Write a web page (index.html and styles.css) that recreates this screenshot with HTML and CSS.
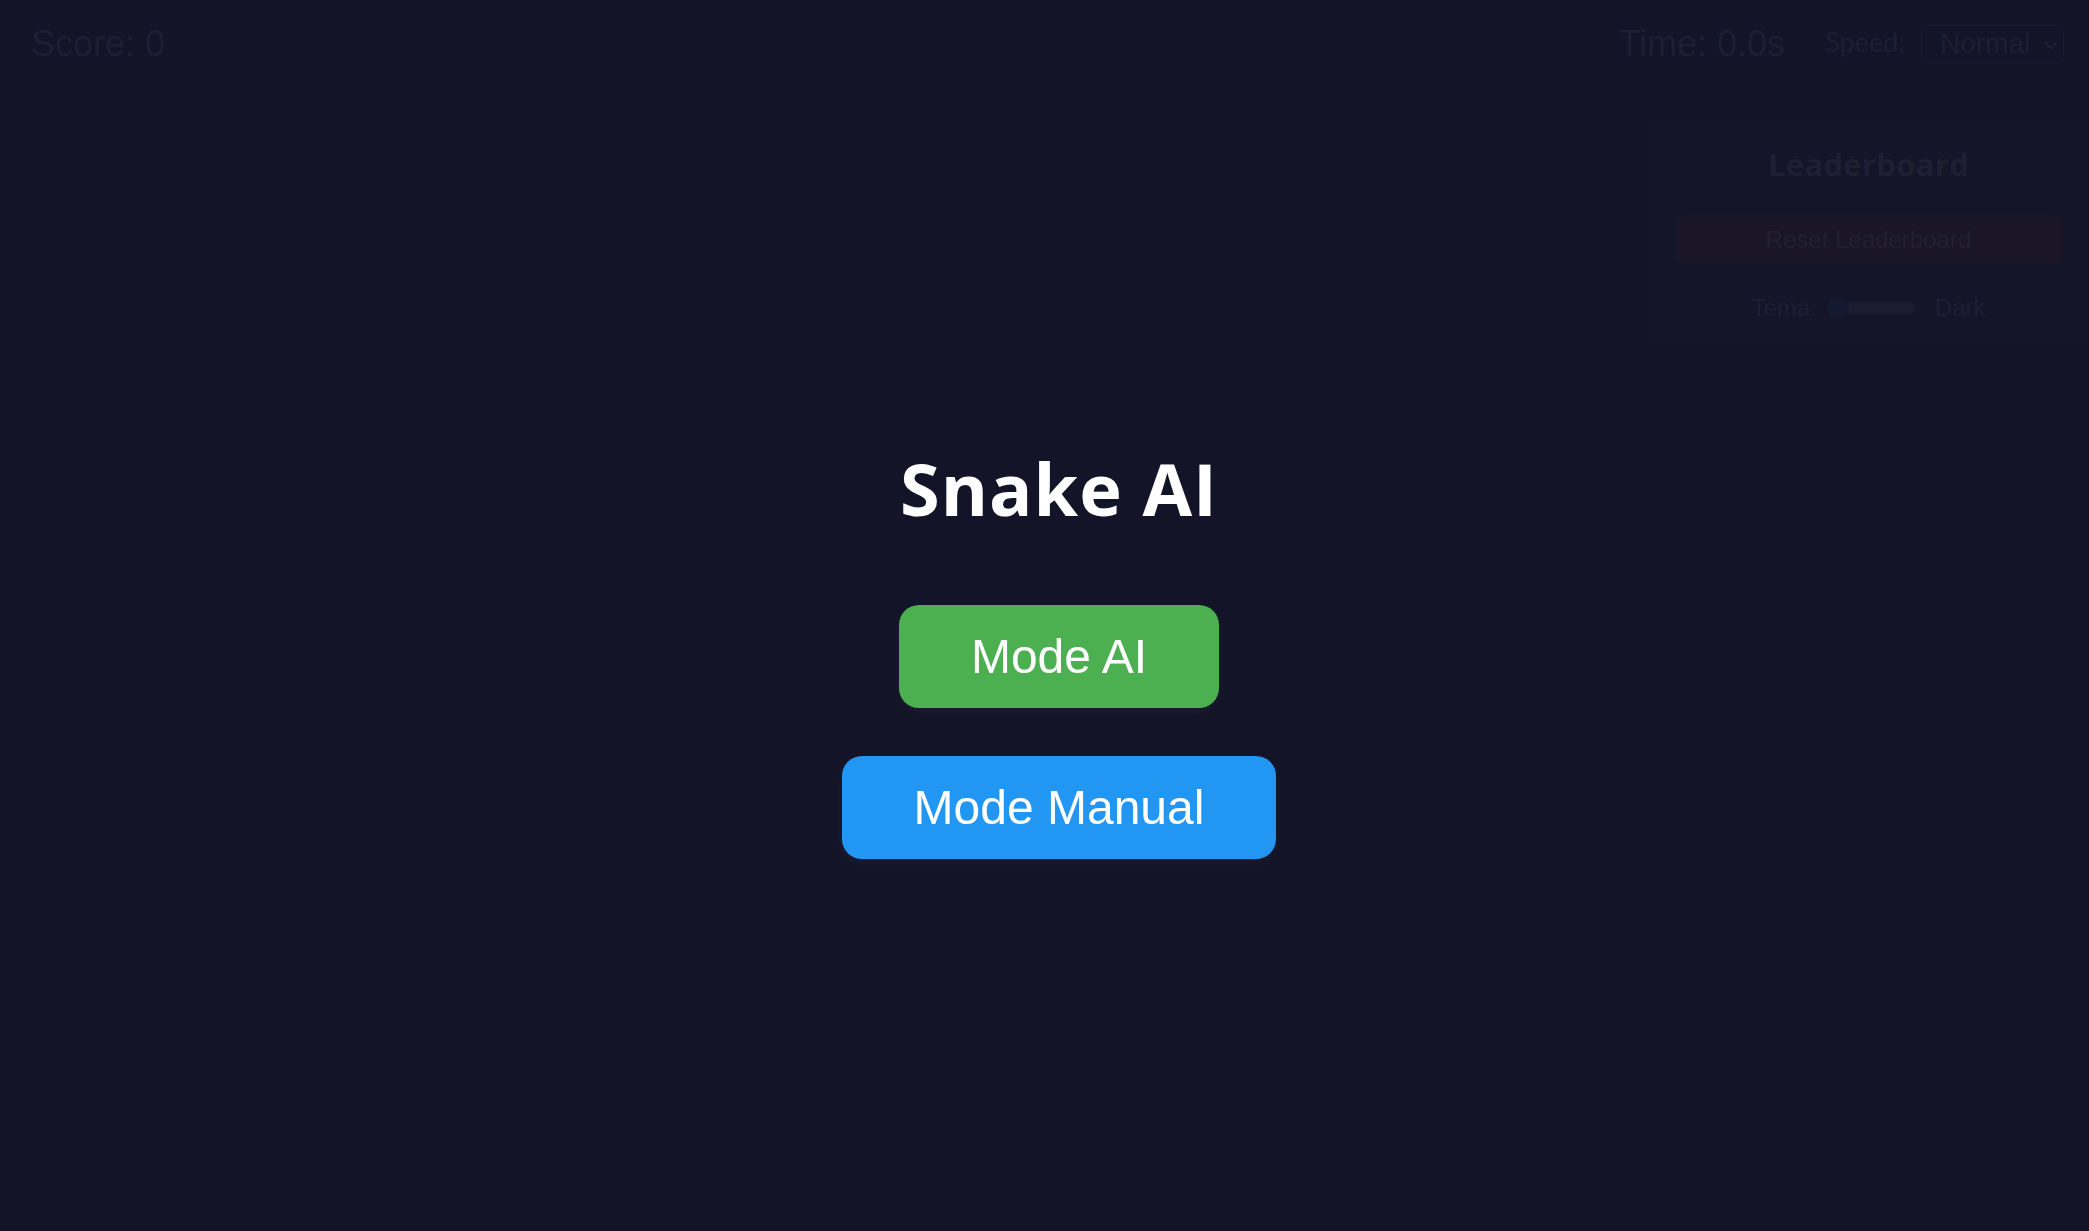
FILE: index.html
```html
<!DOCTYPE html>
<html lang="en">
<head>
<meta charset="utf-8">
<title>Snake AI</title>
<link rel="stylesheet" href="styles.css">
</head>
<body>
<div class="app">
  <header class="topbar">
    <div class="score">Score: 0</div>
    <div class="controls">
      <div class="time">Time: 0.0s</div>
      <span class="speed-label">Speed:</span>
      <div class="select">
        <span>Normal</span>
        <svg class="chev" width="14" height="9" viewBox="0 0 14 9"><path d="M1.5 1.5 L7 7 L12.5 1.5" fill="none" stroke="#1f2034" stroke-width="2" stroke-linecap="round" stroke-linejoin="round"/></svg>
      </div>
    </div>
  </header>
  <main class="main">
    <div class="game"></div>
    <aside class="sidebar">
      <h2 class="lb-title">Leaderboard</h2>
      <button class="reset">Reset Leaderboard</button>
      <div class="theme-row">
        <span>Tema:</span>
        <div class="slider"><div class="track"></div><div class="thumb"></div></div>
        <span>Dark</span>
      </div>
    </aside>
  </main>
</div>
<div class="overlay">
  <h1 class="title">Snake AI</h1>
  <button class="mode mode-ai">Mode AI</button>
  <button class="mode mode-manual">Mode Manual</button>
</div>
</body>
</html>
```
FILE: styles.css
```css
html, body {
  margin: 0;
  padding: 0;
}
body {
  width: 100vw;
  height: 100vh;
  overflow: hidden;
  background: #131428;
  font-family: "Liberation Sans", Arial, sans-serif;
  color: #1d1e32;
}
.app {
  display: flex;
  flex-direction: column;
}
.topbar {
  display: flex;
  justify-content: space-between;
  align-items: center;
  padding: 23px 25px 0 31px;
}
.score {
  font-size: 36px;
}
.controls {
  display: flex;
  align-items: center;
}
.time {
  font-size: 36px;
}
.speed-label {
  font-family: Lato, "Open Sans", sans-serif;
  font-size: 27px;
  margin-left: 40px;
  margin-bottom: 5px;
}
.select {
  margin-left: 16px;
  width: 143px;
  height: 39px;
  box-sizing: border-box;
  border: 1px solid #191a2f;
  border-radius: 8px;
  display: flex;
  align-items: center;
  justify-content: space-between;
  padding: 0 5px 0 18px;
  font-size: 28px;
}
.chev {
  margin-top: 2px;
}
.main {
  display: flex;
  padding-top: 56px;
}
.game {
  flex: 1;
}
.sidebar {
  width: 441px;
  box-sizing: border-box;
  padding: 21px 26px 23px;
  display: flex;
  flex-direction: column;
  align-items: center;
  background: #141529;
  border-radius: 10px 0 0 10px;
}
.lb-title {
  margin: 1px 0 30px;
  font-family: "Open Sans", "Noto Sans", sans-serif;
  font-weight: 700;
  font-size: 31px;
  letter-spacing: 0.3px;
  color: #1e1f33;
}
.reset {
  width: 100%;
  height: 49px;
  border: none;
  border-radius: 10px;
  background: #1a1527;
  color: #1f2034;
  font-family: "Liberation Sans", Arial, sans-serif;
  font-size: 24px;
  margin-bottom: 30px;
}
.theme-row {
  display: flex;
  align-items: center;
  font-size: 24px;
  color: #1d1e32;
}
.slider {
  position: relative;
  width: 88px;
  height: 22px;
  margin: 0 20px 0 10px;
  display: flex;
  align-items: center;
}
.track {
  width: 100%;
  height: 12px;
  border-radius: 6px;
  background: #1b1c2f;
}
.thumb {
  position: absolute;
  left: 0;
  top: 0;
  width: 22px;
  height: 22px;
  border-radius: 50%;
  background: #15192f;
}
.overlay {
  position: fixed;
  inset: 0;
  box-sizing: border-box;
  display: flex;
  flex-direction: column;
  align-items: center;
  padding: 439px 0 0 29px;
}
.title {
  margin: 0 0 68px;
  font-family: "Open Sans", "Noto Sans", sans-serif;
  font-weight: 700;
  font-size: 72px;
  line-height: 98px;
  letter-spacing: 1px;
  color: #ffffff;
}
.mode {
  height: 103px;
  padding: 0 72px;
  border: none;
  border-radius: 20px;
  color: #ffffff;
  font-family: "Liberation Sans", Arial, sans-serif;
  font-size: 48px;
  margin-bottom: 48px;
  box-shadow: 0 4px 12px rgba(255, 255, 255, 0.035);
}
.mode-ai {
  background: #4caf50;
}
.mode-manual {
  background: #2196f3;
}
```
